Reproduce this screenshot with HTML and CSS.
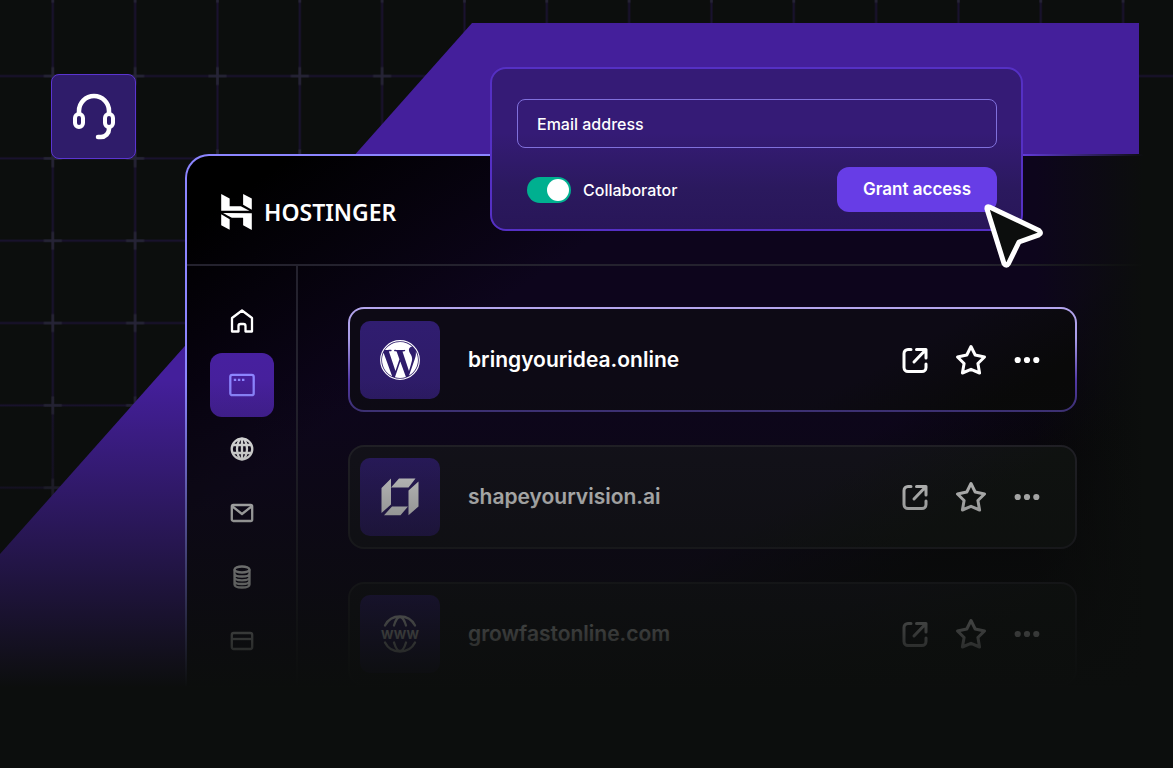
FILE: index.html
```
<!DOCTYPE html>
<html lang="en">
<head>
  <meta charset="UTF-8">
  <meta name="viewport" content="width=device-width, initial-scale=1.0">
  <title>Hostinger - Grant access</title>
  <link rel="stylesheet" href="styles.css">
</head>
<body>
  <!-- shared icons -->
  <svg class="sprite" aria-hidden="true">
    <symbol id="icon-open" viewBox="0 0 32 32">
      <path d="M12 5.500H9a4 4 0 0 0-4 4v14a4 4 0 0 0 4 4h14a4 4 0 0 0 4-4V20M17.500 5.500H27V14M26.500 6L15 18"/>
    </symbol>
    <symbol id="icon-star" viewBox="0 0 32 32">
      <path d="M16 2.500L20.200 11L29.500 13L22.900 19.500L24.600 29L16 25.300L7.400 29L9.100 19.500L2.500 13L11.800 11Z"/>
    </symbol>
    <symbol id="icon-more" viewBox="0 0 32 32">
      <g fill="currentColor" stroke="none">
        <circle cx="6.700" cy="16" r="3.100"/><circle cx="16" cy="16" r="3.100"/><circle cx="25.300" cy="16" r="3.100"/>
      </g>
    </symbol>
  </svg>

  <div class="stage">
    <svg class="grid" aria-hidden="true">
      <defs>
        <pattern id="cells" x="11.600" y="34.900" width="82.330" height="82.330" patternUnits="userSpaceOnUse">
          <path d="M41.200 0V82.330M0 41.200H82.330" stroke="#1a1230" stroke-width="2"/>
          <path d="M41.200 32.200V50.200M32.200 41.200H50.200" stroke="#262436" stroke-width="2.500"/>
        </pattern>
      </defs>
      <rect width="100%" height="100%" fill="url(#cells)"/>
    </svg>
    <div class="slab"></div>

    <button class="support" aria-label="Support">
      <svg width="44" height="48" viewBox="0 0 44 48" fill="none" stroke="#fff" stroke-width="4.500" stroke-linecap="round">
        <path d="M7 20v-2a15 15 0 0 1 30 0v2M37 35v1a8 8 0 0 1-8 8h-3"/>
        <rect x="3" y="21" width="8" height="13" rx="4" stroke-width="4"/>
        <rect x="33" y="21" width="8" height="13" rx="4" stroke-width="4"/>
      </svg>
    </button>

    <div class="window">
      <header class="topbar">
        <a class="brand" href="#">
          <svg width="31" height="36" viewBox="1.800 0 20.400 24" fill="#fff">
            <path d="M16.415 0v7.160l5.785 3.384V2.949L16.415 0ZM1.800 0v11.237h18.815L14.890 8.090l-7.457-.003V3.024L1.800 0ZM16.415 20.894v-5.019l-7.514-.005c.007.033-5.820-3.197-5.820-3.197l19.119.091V24l-5.785-3.106ZM1.800 13.551v7.343l5.633 2.949v-6.988L1.800 13.551Z"/>
          </svg>
          <span>HOSTINGER</span>
        </a>
      </header>

      <div class="body">
        <nav class="sidebar">
          <a href="#" aria-label="Home">
            <svg width="24" height="24" viewBox="0 0 24 24">
              <path d="M2 9L12 1.500L22 9V22.500H15.500V17a2 2 0 0 0-2-2h-3a2 2 0 0 0-2 2v5.500H2Z"/>
            </svg>
          </a>
          <a class="current" href="#" aria-label="Websites">
            <svg width="28" height="28" viewBox="0 0 28 28">
              <rect x="2.300" y="3.800" width="23.400" height="20.400" rx="2"/>
              <path d="M5.800 8.800h2.400M9.900 8.800h2.400M14 8.800h2.400" stroke-linecap="butt"/>
            </svg>
          </a>
          <a href="#" aria-label="Domains">
            <svg width="24" height="24" viewBox="0 0 24 24">
              <circle cx="12" cy="12" r="10.300"/>
              <ellipse cx="12" cy="12" rx="5" ry="10.300"/>
              <path d="M12 1.500v21M2.500 8h19M2.500 16h19"/>
            </svg>
          </a>
          <a href="#" aria-label="Emails">
            <svg width="24" height="24" viewBox="0 0 24 24">
              <rect x="1.800" y="4" width="20.400" height="16" rx="1.500"/>
              <path d="M2.500 5.500L12 13L21.500 5.500"/>
            </svg>
          </a>
          <a href="#" aria-label="Databases">
            <svg width="24" height="24" viewBox="0 0 24 24">
              <ellipse cx="12" cy="4.500" rx="7.500" ry="3"/>
              <path d="M4.500 4.500V19.500c0 4 15 4 15 0V4.500M4.500 8.500c0 4 15 4 15 0M4.500 12.300c0 4 15 4 15 0M4.500 16c0 4 15 4 15 0"/>
            </svg>
          </a>
          <a href="#" aria-label="Billing">
            <svg width="24" height="24" viewBox="0 0 24 24">
              <rect x="1.800" y="4" width="20.400" height="16" rx="2"/>
              <path d="M2 10H22"/>
            </svg>
          </a>
        </nav>

        <ul class="sites">
          <li class="site active">
            <span class="logo">
              <svg width="40" height="40" viewBox="0 0 24 24">
                <circle cx="12" cy="12" r="11.600" fill="none" stroke="#fff" stroke-width=".700"/>
                <path fill="#fff" d="M21.469 6.825c.840 1.537 1.318 3.300 1.318 5.175 0 3.979-2.156 7.456-5.363 9.325l3.295-9.527c.615-1.540.820-2.771.820-3.864 0-.405-.026-.780-.070-1.110m-7.981.105c.647-.030 1.232-.105 1.232-.105.582-.075.514-.930-.067-.899 0 0-1.755.135-2.880.135-1.064 0-2.850-.150-2.850-.150-.585-.030-.661.855-.075.885 0 0 .540.061 1.125.090l1.680 4.605-2.370 7.080L5.354 6.900c.649-.030 1.234-.100 1.234-.100.585-.075.516-.930-.065-.896 0 0-1.746.138-2.874.138-.200 0-.438-.008-.690-.015C4.911 3.150 8.235 1.215 12 1.215c2.809 0 5.365 1.072 7.286 2.833-.046-.003-.091-.009-.141-.009-1.060 0-1.812.923-1.812 1.914 0 .890.513 1.643 1.060 2.531.411.720.890 1.643.890 2.977 0 .915-.354 1.994-.821 3.479l-1.075 3.585-3.900-11.610.001.014zM12 22.784c-1.059 0-2.081-.153-3.048-.437l3.237-9.406 3.315 9.087c.024.053.050.101.078.149-1.120.393-2.325.609-3.582.609M1.211 12c0-1.564.336-3.050.935-4.390L7.290 21.709C3.694 19.960 1.212 16.271 1.211 12"/>
              </svg>
            </span>
            <a class="name" href="#">bringyouridea.online</a>
            <div class="actions">
              <button aria-label="Open"><svg><use href="#icon-open"/></svg></button>
              <button aria-label="Favourite"><svg><use href="#icon-star"/></svg></button>
              <button aria-label="More"><svg><use href="#icon-more"/></svg></button>
            </div>
          </li>
          <li class="site">
            <span class="logo">
              <svg width="38" height="38" viewBox="0 0 38 37" fill="#fff">
                <path d="M.500 9.500L10 0V26L.500 34.500ZM18 0H34.500L27.500 9H10ZM37.500 3V28L27.500 36.700V12ZM11 28H27L19.500 36.700H3Z"/>
              </svg>
            </span>
            <a class="name" href="#">shapeyourvision.ai</a>
            <div class="actions">
              <button aria-label="Open"><svg><use href="#icon-open"/></svg></button>
              <button aria-label="Favourite"><svg><use href="#icon-star"/></svg></button>
              <button aria-label="More"><svg><use href="#icon-more"/></svg></button>
            </div>
          </li>
          <li class="site">
            <span class="logo">
              <svg width="44" height="40" viewBox="0 0 44 40" fill="none" stroke="#fff" stroke-width="2.300" stroke-linecap="round">
                <path d="M7 11.500C10 5.500 16 2.500 22 2.500S34 5.500 37 11.500M16 11.500C17.500 6.500 19.500 3 22 3S26.500 6.500 28 11.500"/>
                <path d="M7 28.500C10 34.500 16 37.500 22 37.500S34 34.500 37 28.500M16 28.500C17.500 33.500 19.500 37 22 37S26.500 33.500 28 28.500"/>
                <text class="www" x="22" y="25" text-anchor="middle">WWW</text>
              </svg>
            </span>
            <a class="name" href="#">growfastonline.com</a>
            <div class="actions">
              <button aria-label="Open"><svg><use href="#icon-open"/></svg></button>
              <button aria-label="Favourite"><svg><use href="#icon-star"/></svg></button>
              <button aria-label="More"><svg><use href="#icon-more"/></svg></button>
            </div>
          </li>
        </ul>
      </div>
    </div>

    <form class="access">
      <input type="email" class="email" placeholder="Email address" aria-label="Email address">
      <div class="access-row">
        <label class="role" for="collab">
          <input type="checkbox" id="collab" checked>
          Collaborator
        </label>
        <button type="button" class="grant">Grant access</button>
      </div>
      <svg class="cursor" width="70" height="70" viewBox="0 0 70 70" aria-hidden="true">
        <path d="M9.500 6L59 29.500Q62 32.500 59 33.800L39 41L28.500 62.500Q26.500 66 24 62.500L7 8Q6.500 5 9.500 6Z" fill="#0c0e0d" stroke="#fff" stroke-width="5" stroke-linejoin="round"/>
      </svg>
    </form>
  </div>
</body>
</html>
```

FILE: styles.css
```
* { box-sizing: border-box; }
body {
  margin: 0;
  background: #0c0e0d;
  color: #fff;
  font-family: Inter, "Liberation Sans", sans-serif;
}
a { color: inherit; text-decoration: none; }
button {
  padding: 0;
  border: none;
  background: none;
  color: inherit;
  font-family: inherit;
  cursor: pointer;
}
.sprite { position: absolute; width: 0; height: 0; }

.stage {
  position: relative;
  min-height: 100vh;
  padding-top: 154px;
  padding-left: 185px;
  overflow: hidden;
}
/* everything sinks into the background towards the bottom */
.stage::after {
  content: "";
  position: absolute;
  top: 380px;
  left: 0;
  right: 0;
  bottom: 0;
  background: linear-gradient(rgba(12, 14, 13, 0), #0c0e0d 308px);
  pointer-events: none;
}
.grid {
  position: absolute;
  top: 0;
  left: 0;
  width: 100%;
  height: 100%;
}
.slab {
  position: absolute;
  top: 23px;
  left: 0;
  right: 34px;
  bottom: 0;
  background: #441f9b;
  clip-path: polygon(472px 0, 100% 0, 100% 100%, 0 100%, 0 531px);
}
.support {
  position: absolute;
  top: 74px;
  left: 51px;
  display: flex;
  align-items: center;
  justify-content: center;
  width: 85px;
  height: 85px;
  border: 1px solid #5b35d0;
  border-radius: 8px;
  background: #2f1c6a;
}

/* window */
.window {
  position: relative;
  border: 2px solid transparent;
  border-right: none;
  border-bottom: none;
  border-top-left-radius: 24px;
  background:
    linear-gradient(to right, rgba(12, 14, 13, 0) 86%, #0c0e0d 97%) padding-box,
    linear-gradient(145deg, #000 6%, #0d051c 30%, #0d051c 62%, #050407 76%, #050505) padding-box,
    linear-gradient(to right, #8c85ff 30%, #673de6 84%, #0c0e0d 97%) border-box;
}
.topbar {
  display: flex;
  align-items: center;
  height: 110px;
  padding-left: 34px;
  border-bottom: 2px solid;
  border-image: linear-gradient(to right, #24222e 80%, #0c0e0d 97%) 1;
}
.brand {
  display: flex;
  align-items: center;
  gap: 12px;
  padding-top: 3px;
  font: 600 23px/32px "Noto Sans", sans-serif;
}
.body { display: flex; }
.sidebar {
  display: flex;
  flex-direction: column;
  align-items: center;
  flex: none;
  width: 111px;
  padding-top: 23px;
  border-right: 2px solid #24222e;
}
.sidebar a {
  display: flex;
  align-items: center;
  justify-content: center;
  width: 64px;
  height: 64px;
  border-radius: 12px;
}
.sidebar svg {
  fill: none;
  stroke: currentColor;
  stroke-width: 2.3;
  stroke-linejoin: round;
}
.sidebar .current {
  background: linear-gradient(#47209f, #452098);
  color: #8c85ff;
}

/* website list */
.sites {
  display: flex;
  flex-direction: column;
  flex: 1;
  gap: 33px;
  margin: 0;
  padding: 41px 96px 0 50px;
  list-style: none;
}
.site {
  display: flex;
  align-items: center;
  gap: 28px;
  height: 104px;
  padding: 0 32px 0 10px;
  border: 2px solid #25242b;
  border-radius: 16px;
  background: linear-gradient(150deg, #14121c 60%, #101311 80%);
}
.site.active {
  height: 105px;
  border-color: transparent;
  background:
    linear-gradient(150deg, #0d0a15 70%, #090909 90%) padding-box,
    linear-gradient(#b5a6ee, #a99de8 30%, #5238a6 70%, #41347c) border-box;
}
.logo {
  display: flex;
  align-items: center;
  justify-content: center;
  width: 80px;
  height: 78px;
  border-radius: 10px;
  background: linear-gradient(#301d70, #2d1b66);
}
.www {
  font: 700 12px Inter, sans-serif;
  fill: #fff;
  stroke: none;
}
.name {
  flex: 1;
  font-size: 21px;
  font-weight: 600;
  line-height: 28px;
}
.actions { display: flex; gap: 24px; }
.actions button { width: 32px; height: 32px; }
.actions svg {
  display: block;
  width: 32px;
  height: 32px;
  fill: none;
  stroke: currentColor;
  stroke-width: 3;
  stroke-linecap: round;
  stroke-linejoin: round;
}

/* access card, floats over the window */
.access {
  position: absolute;
  top: 67px;
  left: 490px;
  right: 150px;
  padding: 30px 24px 17px 25px;
  border: 2px solid #5530c4;
  border-radius: 16px;
  background: linear-gradient(#351b76 40%, #2b195e 75%, #281658);
}
.email {
  display: block;
  width: 100%;
  height: 49px;
  padding: 0 19px;
  border: 1px solid #8070dc;
  border-radius: 8px;
  background: none;
  color: #fff;
  font: 500 16px/24px Inter, sans-serif;
}
.email::placeholder { color: #fff; opacity: 1; }
.access-row {
  display: flex;
  align-items: center;
  justify-content: space-between;
  margin-top: 19px;
  padding-left: 10px;
}
.role {
  display: flex;
  align-items: center;
  gap: 12px;
  font-size: 16px;
  font-weight: 500;
  line-height: 24px;
}
.role input {
  appearance: none;
  width: 44px;
  height: 26px;
  margin: 0;
  padding: 2px;
  border-radius: 13px;
  background: #4a4a5c;
}
.role input::before {
  content: "";
  display: block;
  width: 22px;
  height: 22px;
  border-radius: 50%;
  background: #fff;
}
.role input:checked { padding-left: 20px; background: #00b090; }
.grant {
  width: 160px;
  height: 45px;
  padding-bottom: 2px;
  border-radius: 12px;
  background: #673de6;
  font-size: 17px;
  font-weight: 600;
}
.cursor {
  position: absolute;
  top: 132px;
  right: -29px;
}
```
